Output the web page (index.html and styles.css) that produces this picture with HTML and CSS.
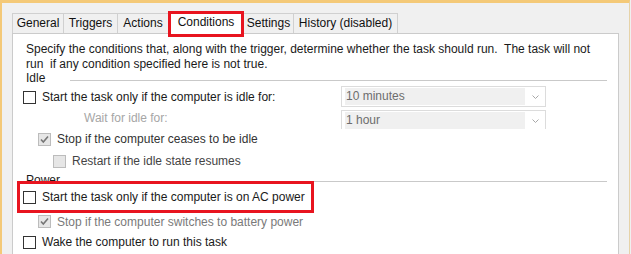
FILE: index.html
```html
<!DOCTYPE html>
<html>
<head>
<meta charset="utf-8">
<link rel="stylesheet" href="styles.css">
</head>
<body>
<div class="window">
  <div class="tabs">
    <div class="tab t-general">General</div>
    <div class="tab t-triggers">Triggers</div>
    <div class="tab t-actions">Actions</div>
    <div class="tab tab-selected t-conditions">Conditions</div>
    <div class="tab t-settings">Settings</div>
    <div class="tab t-history">History (disabled)</div>
  </div>
  <div class="panel">
    <p class="desc"><span>Specify the conditions that, along with the trigger, determine whether the task should run.&nbsp; The task will not</span><span>run&nbsp; if any condition specified here is not true.</span></p>
    <div class="group-head head-idle"><span>Idle</span><span class="rule"></span></div>
    <div class="row row-a">
      <span class="cb"></span><span>Start the task only if the computer is idle for:</span>
      <div class="combo"><span class="combo-value">10 minutes</span><span class="combo-arrow"><svg width="7" height="4" viewBox="0 0 7 4"><polyline points="0.5,0.5 3.5,3.5 6.5,0.5" fill="none" stroke="#a8a8a8" stroke-width="1"/></svg></span></div>
    </div>
    <div class="row row-b">
      <span class="wait">Wait for idle for:</span>
      <div class="combo combo-cut"><span class="combo-value">1 hour</span><span class="combo-arrow"><svg width="7" height="4" viewBox="0 0 7 4"><polyline points="0.5,0.5 3.5,3.5 6.5,0.5" fill="none" stroke="#a8a8a8" stroke-width="1"/></svg></span></div>
    </div>
    <div class="row row-c lvl1">
      <span class="cb cb-disabled"><svg width="11" height="11" viewBox="0 0 11 11"><polyline points="2,5.5 4.3,8 9,2.5" fill="none" stroke="#767676" stroke-width="1.6"/></svg></span><span class="txt-ceases">Stop if the computer ceases to be idle</span>
    </div>
    <div class="row row-d lvl2">
      <span class="cb cb-disabled"></span><span class="txt-restart">Restart if the idle state resumes</span>
    </div>
    <div class="group-head head-power"><span>Power</span><span class="rule"></span></div>
    <div class="alert">
      <span class="cb"></span><span>Start the task only if the computer is on AC power</span>
    </div>
    <div class="row row-f lvl1">
      <span class="cb cb-disabled"><svg width="11" height="11" viewBox="0 0 11 11"><polyline points="2,5.5 4.3,8 9,2.5" fill="none" stroke="#767676" stroke-width="1.6"/></svg></span><span class="txt-battery">Stop if the computer switches to battery power</span>
    </div>
    <div class="row row-g">
      <span class="cb"></span><span>Wake the computer to run this task</span>
    </div>
  </div>
</div>
</body>
</html>
```
FILE: styles.css
```css
html, body {
  margin: 0;
  padding: 0;
}
body {
  background: #f0f0f0;
  font-family: "Liberation Sans", Arial, sans-serif;
  font-size: 12px;
  color: #1a1a1a;
  width: 631px;
  height: 254px;
  overflow: hidden;
}
.window {
  box-sizing: border-box;
  width: 630px;
  height: 254px;
  overflow: hidden;
  border-top: 3px solid #f4c978;
  border-left: 2px solid #f4c978;
  border-right: 1px solid #e6d3a8;
  padding: 10px 0 0 10px;
}
.tabs {
  display: flex;
  height: 20px;
}
.tab {
  box-sizing: border-box;
  height: 20px;
  border: 1px solid #d0d0d0;
  border-bottom: none;
  background: #f0f0f0;
  margin-left: -1px;
  display: flex;
  justify-content: center;
  line-height: 18px;
  white-space: nowrap;
  color: #111;
}
.tab:first-child {
  margin-left: 0;
}
.tab-selected {
  position: relative;
  z-index: 1;
  height: 26px;
  margin-top: -2px;
  border: 3px solid #e8141f;
  background: #fff;
  line-height: 14px;
  padding-top: 1px;
}
.t-general { width: 52px; }
.t-triggers { width: 55px; }
.t-actions { width: 52px; }
.t-conditions { width: 76px; }
.t-settings { width: 51px; }
.t-history { width: 105px; }

.panel {
  box-sizing: border-box;
  width: 607px;
  height: 240px;
  background: #fff;
  border: 1px solid #cbcbcb;
  padding: 8px 0 0 10px;
}
.desc {
  margin: 0 0 0 3px;
  line-height: 15px;
  white-space: nowrap;
}
.desc span {
  display: block;
}
.group-head {
  display: flex;
  margin-left: 3px;
}
.head-idle {
  height: 15px;
  line-height: 15px;
  margin-top: -1px;
}
.head-power {
  height: 16px;
  line-height: 16px;
}
.rule {
  flex: 1;
  height: 1px;
  background: #c9c9c9;
  margin: 9px 11px 0 25px;
}
.head-power .rule {
  margin-left: 9px;
}
.row {
  display: flex;
  align-items: center;
  white-space: nowrap;
}
.row-a { height: 22px; }
.row-b { height: 20px; }
.row-c { height: 22px; }
.row-d { height: 22px; }
.row-f { height: 17px; }
.row-g { height: 24px; }
.lvl1 { padding-left: 15px; }
.lvl2 { padding-left: 30px; }
.wait {
  margin-left: 61px;
  color: #a6a6a6;
}
.cb {
  box-sizing: border-box;
  flex: none;
  width: 13px;
  height: 13px;
  border: 1px solid #333;
  background: #fff;
  margin-right: 6px;
  display: flex;
  align-items: center;
  justify-content: center;
}
.cb-disabled {
  border-color: #bcbcbc;
  background: #e6e6e6;
}
.txt-ceases { color: #333; }
.txt-restart { color: #444; }
.txt-battery { color: #7a7a7a; }

.combo {
  margin-left: auto;
  margin-right: 72px;
  align-self: flex-start;
  box-sizing: border-box;
  width: 205px;
  height: 21px;
  border: 1px solid #dcdcdc;
  background: #fff;
  padding: 1px 0 1px 3px;
  display: flex;
}
.combo-cut {
  margin-top: 2px;
  height: 19px;
  border-bottom: none;
  padding-bottom: 0;
}
.combo-value {
  width: 180px;
  flex: none;
  background: #f0f0f0;
  color: #6d6d6d;
  line-height: 17px;
  padding-left: 1px;
  box-sizing: border-box;
}
.combo-arrow {
  flex: 1;
  display: flex;
  align-items: center;
  justify-content: center;
}
.alert {
  position: relative;
  z-index: 1;
  display: flex;
  align-items: center;
  box-sizing: border-box;
  width: 297px;
  height: 32px;
  border: 3px solid #e8141f;
  margin: -7px 0 0 -6px;
  padding-left: 3px;
  white-space: nowrap;
}
```
